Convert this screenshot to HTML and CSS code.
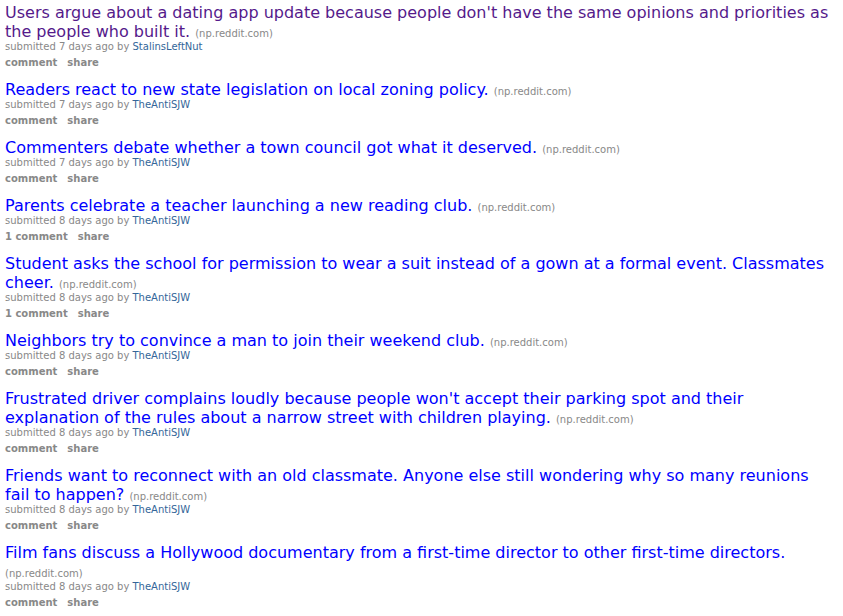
FILE: index.html
```html
<!DOCTYPE html>
<html>
<head>
<meta charset="utf-8">
<link rel="stylesheet" href="styles.css">
</head>
<body>
<div class="listing">
  <div class="thing">
    <p class="title"><a class="title-link visited">Users argue about a dating app update because people don't have the same opinions and priorities as the people who built it.</a> <span class="domain">(np.reddit.com)</span></p>
    <p class="tagline">submitted 7 days ago by <a class="author">StalinsLeftNut</a></p>
    <ul class="buttons"><li>comment</li><li>share</li></ul>
  </div>
  <div class="thing">
    <p class="title"><a class="title-link">Readers react to new state legislation on local zoning policy.</a> <span class="domain">(np.reddit.com)</span></p>
    <p class="tagline">submitted 7 days ago by <a class="author">TheAntiSJW</a></p>
    <ul class="buttons"><li>comment</li><li>share</li></ul>
  </div>
  <div class="thing">
    <p class="title"><a class="title-link">Commenters debate whether a town council got what it deserved.</a> <span class="domain">(np.reddit.com)</span></p>
    <p class="tagline">submitted 7 days ago by <a class="author">TheAntiSJW</a></p>
    <ul class="buttons"><li>comment</li><li>share</li></ul>
  </div>
  <div class="thing">
    <p class="title"><a class="title-link">Parents celebrate a teacher launching a new reading club.</a> <span class="domain">(np.reddit.com)</span></p>
    <p class="tagline">submitted 8 days ago by <a class="author">TheAntiSJW</a></p>
    <ul class="buttons"><li>1 comment</li><li>share</li></ul>
  </div>
  <div class="thing">
    <p class="title"><a class="title-link">Student asks the school for permission to wear a suit instead of a gown at a formal event. Classmates cheer.</a> <span class="domain">(np.reddit.com)</span></p>
    <p class="tagline">submitted 8 days ago by <a class="author">TheAntiSJW</a></p>
    <ul class="buttons"><li>1 comment</li><li>share</li></ul>
  </div>
  <div class="thing">
    <p class="title"><a class="title-link">Neighbors try to convince a man to join their weekend club.</a> <span class="domain">(np.reddit.com)</span></p>
    <p class="tagline">submitted 8 days ago by <a class="author">TheAntiSJW</a></p>
    <ul class="buttons"><li>comment</li><li>share</li></ul>
  </div>
  <div class="thing">
    <p class="title"><a class="title-link">Frustrated driver complains loudly because people won't accept their parking spot and their explanation of the rules about a narrow street with children playing.</a> <span class="domain">(np.reddit.com)</span></p>
    <p class="tagline">submitted 8 days ago by <a class="author">TheAntiSJW</a></p>
    <ul class="buttons"><li>comment</li><li>share</li></ul>
  </div>
  <div class="thing">
    <p class="title"><a class="title-link">Friends want to reconnect with an old classmate. Anyone else still wondering why so many reunions fail to happen?</a> <span class="domain">(np.reddit.com)</span></p>
    <p class="tagline">submitted 8 days ago by <a class="author">TheAntiSJW</a></p>
    <ul class="buttons"><li>comment</li><li>share</li></ul>
  </div>
  <div class="thing">
    <p class="title"><a class="title-link">Film fans discuss a Hollywood documentary from a first-time director to other first-time directors.</a> <span class="domain">(np.reddit.com)</span></p>
    <p class="tagline">submitted 8 days ago by <a class="author">TheAntiSJW</a></p>
    <ul class="buttons"><li>comment</li><li>share</li></ul>
  </div>
</div>
</body>
</html>
```
FILE: styles.css
```css
html, body {
  margin: 0;
  padding: 0;
  background: #ffffff;
}
body {
  font-family: "DejaVu Sans", Verdana, sans-serif;
}
.listing {
  padding: 3px 8px 0 5px;
}
.thing {
  margin-bottom: 9px;
}
.title {
  margin: 0;
  font-size: 16px;
  line-height: 19px;
}
.title-link {
  color: #0000ff;
  text-decoration: none;
}
.title-link.visited {
  color: #551a8b;
}
.domain {
  font-size: 10px;
  line-height: 10px;
  color: #888888;
  white-space: nowrap;
}
.tagline {
  margin: 0;
  font-size: 10px;
  line-height: 12px;
  color: #888888;
}
.author {
  color: #336699;
  text-decoration: none;
}
.buttons {
  list-style: none;
  margin: 2px 0 0 0;
  padding: 0;
  display: flex;
  gap: 10px;
  font-size: 10px;
  line-height: 16px;
  font-weight: bold;
  color: #888888;
}
```
